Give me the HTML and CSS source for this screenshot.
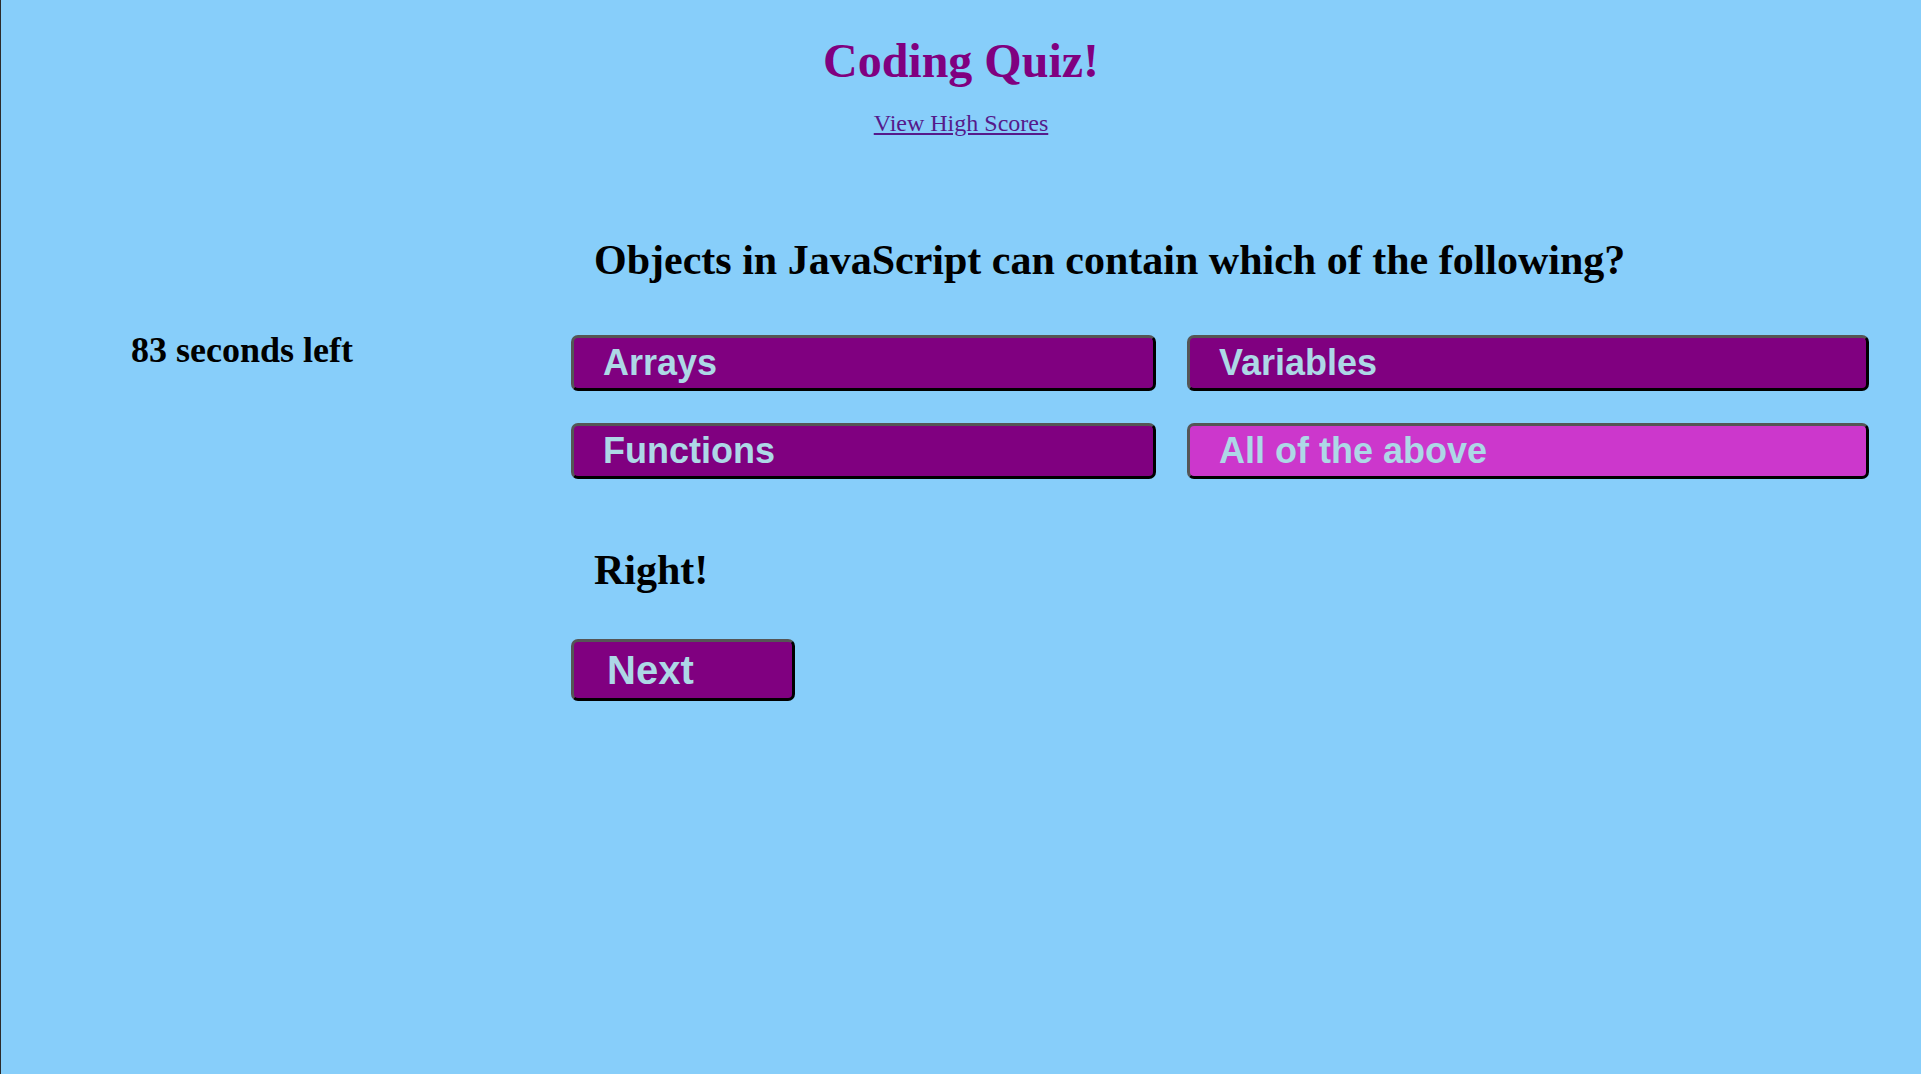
FILE: index.html
```html
<!DOCTYPE html>
<html lang="en">
<head>
<meta charset="utf-8">
<title>Coding Quiz!</title>
<link rel="stylesheet" href="styles.css">
</head>
<body>
<header class="top">
  <h1 class="title">Coding Quiz!</h1>
  <p class="scores"><a class="scores-link" href="#">View High Scores</a></p>
</header>
<main class="layout">
  <aside class="timer-col">
    <p class="timer">83 seconds left</p>
  </aside>
  <section class="quiz">
    <h2 class="question">Objects in JavaScript can contain which of the following?</h2>
    <div class="answers">
      <button class="answer">Arrays</button>
      <button class="answer">Variables</button>
      <button class="answer">Functions</button>
      <button class="answer answer-picked">All of the above</button>
    </div>
    <h2 class="result">Right!</h2>
    <button class="next">Next</button>
  </section>
</main>
</body>
</html>
```

FILE: styles.css
```css
html {
  background: #87cefa;
  border-left: 1px solid #2b2b2b;
  min-height: 100%;
}

body {
  margin: 0;
  font-family: "Liberation Serif", "Times New Roman", serif;
  color: #000;
}

.top {
  text-align: center;
}

.title {
  margin: 33px 0 0;
  font-size: 48px;
  font-weight: bold;
  color: #800080;
  line-height: normal;
}

.scores {
  margin: 22px 0 0;
  font-size: 24px;
}

.scores-link {
  color: #551a8b;
}

.layout {
  display: grid;
  grid-template-columns: 570px 1298px;
  align-items: start;
}

.timer-col {
  padding-left: 130px;
}

.timer {
  margin: 192px 0 0;
  font-size: 36px;
  font-weight: bold;
}

.quiz {
  display: flex;
  flex-direction: column;
  align-items: flex-start;
}

.question {
  margin: 99px 0 0;
  padding-left: 23px;
  font-size: 42px;
  font-weight: bold;
}

.answers {
  display: grid;
  grid-template-columns: 585px 682px;
  column-gap: 31px;
  row-gap: 32px;
  margin-top: 51px;
}

.answer,
.next {
  font-family: "Liberation Sans", Arial, sans-serif;
  font-weight: bold;
  color: #add8e6;
  background: #800080;
  border: 3px solid;
  border-color: #555 #000 #000 #555;
  border-radius: 7px;
  text-align: left;
  cursor: pointer;
  box-sizing: border-box;
}

.answer {
  font-size: 36px;
  line-height: 42px;
  padding: 4px 29px;
}

.answer-picked {
  background: #cc37cc;
}

.result {
  margin: 67px 0 0;
  padding-left: 23px;
  font-size: 42px;
  font-weight: bold;
}

.next {
  margin-top: 45px;
  width: 224px;
  font-size: 40px;
  line-height: 46px;
  padding: 5px 33px;
}
```
